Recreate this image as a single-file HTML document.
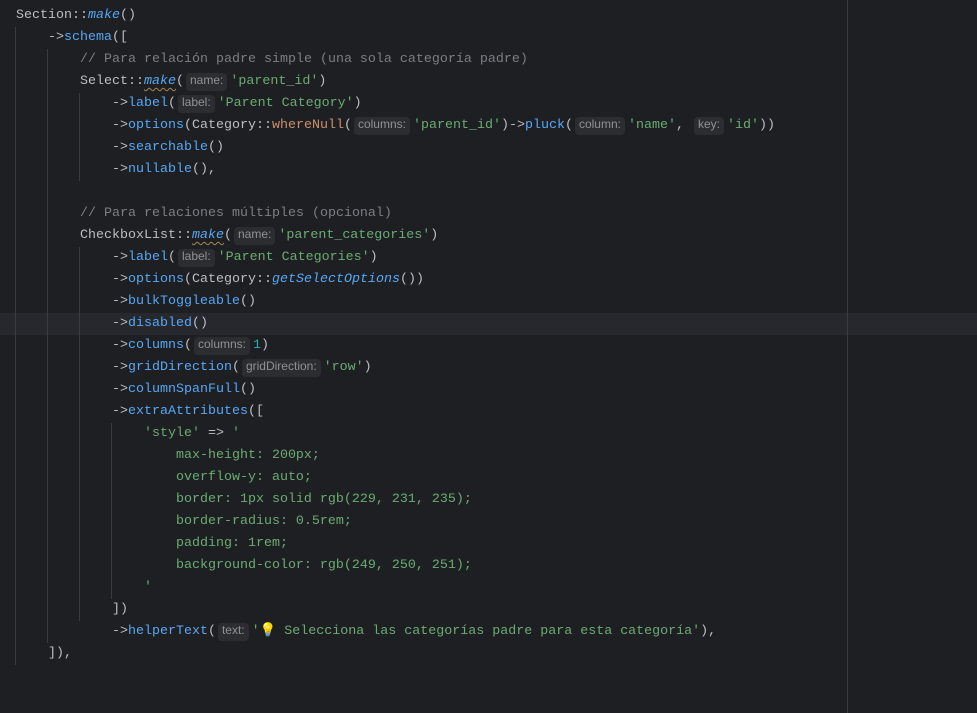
<!DOCTYPE html>
<html><head><meta charset="utf-8"><style>
body{margin:0;width:977px;height:713px;background:#1e1f22;overflow:hidden;position:relative;font-family:"Liberation Mono",monospace;font-size:13.33px;color:#bcbec4}
.l{position:absolute;left:16px;height:22px;line-height:22px;white-space:pre;overflow:visible}
.m{color:#56a8f5}.i{color:#56a8f5;font-style:italic}.s{color:#6aab73}.c{color:#7a7e85}.o{color:#cf8e6d}.n{color:#2aacb8}
.u{text-decoration:underline wavy #a08a4a;text-underline-offset:3px;text-decoration-thickness:1px}
.h{display:inline-block;box-sizing:border-box;font-family:"Liberation Sans",sans-serif;font-size:12px;color:#8f9196;background:#2b2d30;border-radius:4px;padding:0 4px 3px;height:18px;line-height:15px;margin:2px 3px 0 2px;vertical-align:top}
.g{position:absolute;width:1px;background:#393b40}
.hl{position:absolute;left:0;right:0;top:313px;height:22px;background:#26282e}
</style></head><body>
<div class="hl"></div>
<div style="position:absolute;left:847px;top:0;width:1px;height:713px;background:#393b40"></div>
<div class="g" style="left:15px;top:27px;height:638px"></div>
<div class="g" style="left:47px;top:49px;height:594px"></div>
<div class="g" style="left:79px;top:93px;height:88px"></div>
<div class="g" style="left:79px;top:247px;height:374px"></div>
<div class="g" style="left:111px;top:423px;height:176px"></div>
<div class="l" style="top:5px">Section::<span class="i">make</span>()</div>
<div class="l" style="top:27px">    -&gt;<span class="m">schema</span>([</div>
<div class="l" style="top:49px">        <span class="c">// Para relación padre simple (una sola categoría padre)</span></div>
<div class="l" style="top:71px">        Select::<span class="i u">make</span>(<span class="h">name:</span><span class="s">'parent_id'</span>)</div>
<div class="l" style="top:93px">            -&gt;<span class="m">label</span>(<span class="h">label:</span><span class="s">'Parent Category'</span>)</div>
<div class="l" style="top:115px">            -&gt;<span class="m">options</span>(Category::<span class="o">whereNull</span>(<span class="h">columns:</span><span class="s">'parent_id'</span>)-&gt;<span class="m">pluck</span>(<span class="h">column:</span><span class="s">'name'</span>, <span class="h">key:</span><span class="s">'id'</span>))</div>
<div class="l" style="top:137px">            -&gt;<span class="m">searchable</span>()</div>
<div class="l" style="top:159px">            -&gt;<span class="m">nullable</span>(),</div>
<div class="l" style="top:203px">        <span class="c">// Para relaciones múltiples (opcional)</span></div>
<div class="l" style="top:225px">        CheckboxList::<span class="i u">make</span>(<span class="h">name:</span><span class="s">'parent_categories'</span>)</div>
<div class="l" style="top:247px">            -&gt;<span class="m">label</span>(<span class="h">label:</span><span class="s">'Parent Categories'</span>)</div>
<div class="l" style="top:269px">            -&gt;<span class="m">options</span>(Category::<span class="i">getSelectOptions</span>())</div>
<div class="l" style="top:291px">            -&gt;<span class="m">bulkToggleable</span>()</div>
<div class="l" style="top:313px">            -&gt;<span class="m">disabled</span>()</div>
<div class="l" style="top:335px">            -&gt;<span class="m">columns</span>(<span class="h">columns:</span><span class="n">1</span>)</div>
<div class="l" style="top:357px">            -&gt;<span class="m">gridDirection</span>(<span class="h">gridDirection:</span><span class="s">'row'</span>)</div>
<div class="l" style="top:379px">            -&gt;<span class="m">columnSpanFull</span>()</div>
<div class="l" style="top:401px">            -&gt;<span class="m">extraAttributes</span>([</div>
<div class="l" style="top:423px">                <span class="s">'style'</span> =&gt; <span class="s">'</span></div>
<div class="l s" style="top:445px">                    max-height: 200px;</div>
<div class="l s" style="top:467px">                    overflow-y: auto;</div>
<div class="l s" style="top:489px">                    border: 1px solid rgb(229, 231, 235);</div>
<div class="l s" style="top:511px">                    border-radius: 0.5rem;</div>
<div class="l s" style="top:533px">                    padding: 1rem;</div>
<div class="l s" style="top:555px">                    background-color: rgb(249, 250, 251);</div>
<div class="l s" style="top:577px">                '</div>
<div class="l" style="top:599px">            ])</div>
<div class="l" style="top:621px">            -&gt;<span class="m">helperText</span>(<span class="h">text:</span><span class="s">'<span style="color:#f5c518">💡</span> Selecciona las categorías padre para esta categoría'</span>),</div>
<div class="l" style="top:643px">    ]),</div>
</body></html>
